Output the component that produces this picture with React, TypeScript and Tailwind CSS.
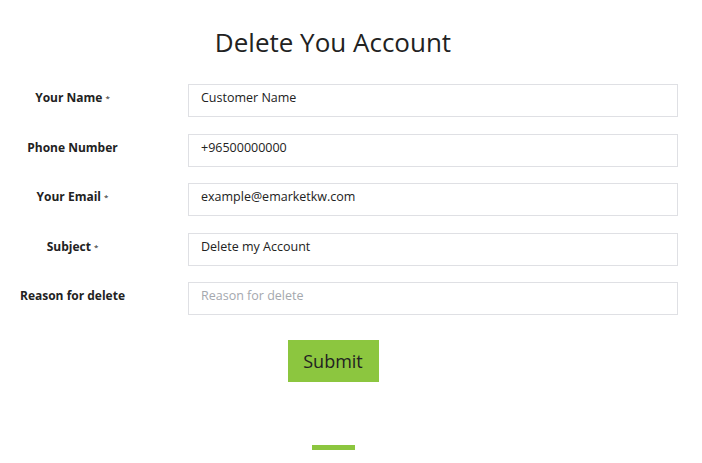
import React from "react";

const fields = [
  { label: "Your Name", required: true, value: "Customer Name" },
  { label: "Phone Number", required: false, value: "+96500000000" },
  { label: "Your Email", required: true, value: "example@emarketkw.com" },
  { label: "Subject", required: true, value: "Delete my Account" },
  { label: "Reason for delete", required: false, value: "", placeholder: "Reason for delete" },
];

export default function App() {
  return (
    <div className="w-[702px] h-[463px] bg-white font-['Open_Sans',sans-serif] text-[#222]">
      <h1 className="w-[666px] pt-[22px] text-center text-[26px] leading-[40px] text-[#222]">
        Delete You Account
      </h1>
      <form className="mt-[22px] flex flex-col gap-[16.5px]">
        {fields.map((f) => (
          <Row key={f.label} {...f} />
        ))}
        <div className="w-[666px] mt-[8.5px] flex justify-center">
          <button
            type="button"
            className="w-[91px] h-[42px] bg-[#8cc63f] text-[18px] text-[#222]"
          >
            Submit
          </button>
        </div>
      </form>
      <div className="w-[666px] mt-[63px] flex justify-center">
        <div className="w-[43px] h-[5px] bg-[#8cc63f]" />
      </div>
    </div>
  );
}

const Row = ({
  label,
  required,
  value,
  placeholder,
}: {
  label: string;
  required: boolean;
  value: string;
  placeholder?: string;
}) => {
  return (
    <div className="flex items-start">
      <label className="w-[145px] pt-[6px] text-center text-[12px] font-bold leading-[16px]">
        {label}
        {required && <span className="ml-[3px] text-[8px] font-normal align-top">*</span>}
      </label>
      <div className="ml-[43px] w-[490px] h-[33px] shrink-0 border border-[#dfe0e4] px-[12px] pt-[5px] text-[12.5px] leading-[16px]">
        {value ? (
          <span className="text-[#222]">{value}</span>
        ) : (
          <span className="text-[#a4a8ae]">{placeholder}</span>
        )}
      </div>
    </div>
  );
};
